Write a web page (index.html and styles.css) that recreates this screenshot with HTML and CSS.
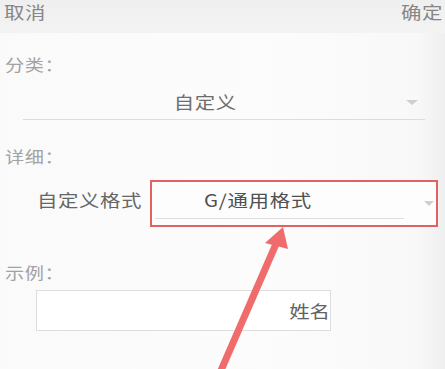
FILE: index.html
```html
<!DOCTYPE html>
<html lang="zh">
<head>
<meta charset="utf-8">
<title>自定义格式</title>
<link rel="stylesheet" href="styles.css">
</head>
<body>
<div class="page">
  <header class="topbar">
    <span class="btn wide wide-left">取消</span>
    <span class="btn wide wide-right">确定</span>
  </header>
  <main class="main">
    <div class="label label-first"><span class="wide wide-left">分类：</span></div>
    <div class="select">
      <span class="select-text"><span class="wide wide-center">自定义</span></span>
      <span class="caret"></span>
    </div>
    <div class="label label-detail"><span class="wide wide-left">详细：</span></div>
    <div class="format-row">
      <span class="format-label"><span class="wide wide-left">自定义格式</span></span>
      <div class="format-box">
        <div class="format-field"><span class="wide wide-left">G/通用格式</span></div>
        <span class="caret caret-small"></span>
      </div>
    </div>
    <div class="label label-example"><span class="wide wide-left">示例：</span></div>
    <div class="example"><span class="wide wide-right">姓名</span></div>
  </main>
  <svg class="arrow" width="445" height="369" viewBox="0 0 445 369">
    <line x1="219" y1="375" x2="276" y2="244" stroke="#f06c6c" stroke-width="7" stroke-linecap="butt"/>
    <polygon points="283,227 265,243 288,249" fill="#f06c6c"/>
  </svg>
</div>
</body>
</html>
```
FILE: styles.css
```css
html, body {
  margin: 0;
  padding: 0;
}
body {
  width: 445px;
  height: 369px;
  overflow: hidden;
  background: #f9f9f9;
  font-family: "Noto Sans CJK SC", "Noto Sans", sans-serif;
}
.page {
  position: relative;
  width: 445px;
  height: 369px;
}
.wide {
  display: inline-block;
  transform: scaleX(1.2);
}
.wide-left {
  transform-origin: left center;
}
.wide-right {
  transform-origin: right center;
}
.wide-center {
  transform-origin: center center;
}
.topbar {
  height: 33px;
  display: flex;
  justify-content: space-between;
  align-items: flex-start;
  padding: 0 2px 0 4px;
  background: linear-gradient(to bottom, #efefef, #f3f3f3);
}
.btn {
  font-size: 17px;
  line-height: 24px;
  letter-spacing: 0.5px;
  color: #868686;
}
.main {
  height: 336px;
  background: linear-gradient(to right, #fafafa 0%, #fcfcfc 60%, #f8f8f8 94%, #efefef 100%);
}
.label {
  font-size: 16px;
  line-height: 20px;
  letter-spacing: 0.5px;
  color: #a2a2a2;
  padding-left: 5px;
}
.label-first {
  padding-top: 21px;
}
.select {
  display: flex;
  align-items: flex-start;
  height: 28px;
  margin: 17px 20px 0 23px;
  border-bottom: 1px solid #dcdcdc;
}
.select-text {
  flex: 1;
  text-align: center;
  padding-right: 18px;
  font-size: 17px;
  line-height: 22px;
  letter-spacing: 0.5px;
  color: #6e6e6e;
}
.caret {
  width: 0;
  height: 0;
  margin-top: 9px;
  margin-right: 7px;
  border-left: 6.5px solid transparent;
  border-right: 6.5px solid transparent;
  border-top: 5px solid #cfcfcf;
}
.label-detail {
  margin-top: 26px;
}
.format-row {
  display: flex;
  align-items: flex-start;
  margin-top: 14px;
  padding-left: 37px;
}
.format-label {
  width: 113px;
  margin-top: 8px;
  font-size: 17px;
  line-height: 24px;
  letter-spacing: 0.5px;
  color: #666666;
}
.format-box {
  display: flex;
  align-items: center;
  width: 284px;
  height: 43px;
  border: 2px solid #e26262;
  background: #fdfdfd;
}
.format-field {
  width: 200px;
  height: 36px;
  margin-left: 3px;
  margin-bottom: 6px;
  padding-left: 49px;
  border-bottom: 1px solid #dedede;
  font-size: 17px;
  line-height: 36px;
  letter-spacing: 0.6px;
  color: #505050;
}
.caret-small {
  margin-top: 0;
  margin-left: auto;
  margin-right: 2px;
  border-left-width: 5.5px;
  border-right-width: 5.5px;
  border-top-width: 5px;
}
.label-example {
  margin-top: 35px;
}
.example {
  width: 293px;
  height: 39px;
  margin: 8px 0 0 36px;
  padding-right: 0;
  border: 1px solid #dddddd;
  background: #ffffff;
  text-align: right;
  font-size: 17px;
  line-height: 39px;
  letter-spacing: 0;
  color: #626262;
}
.arrow {
  position: absolute;
  left: 0;
  top: 0;
  pointer-events: none;
}
```
